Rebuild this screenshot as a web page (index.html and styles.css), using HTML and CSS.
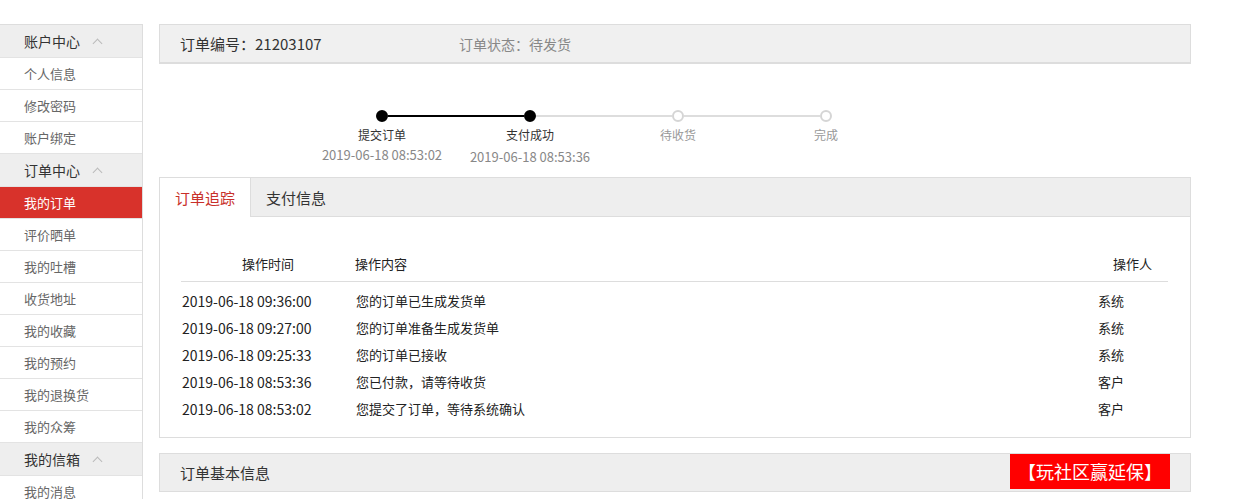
FILE: index.html
```html
<!DOCTYPE html>
<html lang="zh-CN">
<head>
    <meta charset="UTF-8">
    <title>订单详情</title>
    <link rel="stylesheet" href="styles.css">
</head>
<body>
    <div class="page">
        <div class="side">
            <div class="side-title">账户中心 <span class="arrow"></span></div>
            <a class="side-item">个人信息</a>
            <a class="side-item">修改密码</a>
            <a class="side-item">账户绑定</a>
            <div class="side-title">订单中心 <span class="arrow"></span></div>
            <a class="side-item active">我的订单</a>
            <a class="side-item">评价晒单</a>
            <a class="side-item">我的吐槽</a>
            <a class="side-item">收货地址</a>
            <a class="side-item">我的收藏</a>
            <a class="side-item">我的预约</a>
            <a class="side-item">我的退换货</a>
            <a class="side-item">我的众筹</a>
            <div class="side-title">我的信箱 <span class="arrow"></span></div>
            <a class="side-item">我的消息</a>
        </div>

        <div class="main">
            <div class="order-head">
                <span class="order-no">订单编号：21203107</span>
                <span class="order-status">订单状态：待发货</span>
            </div>

            <div class="steps">
                <div class="step done">
                    <div class="track"><i class="line-l"></i><span class="dot"></span><i class="line-r on"></i></div>
                    <p class="step-name">提交订单</p>
                    <p class="step-time">2019-06-18 08:53:02</p>
                </div>
                <div class="step done">
                    <div class="track"><i class="line-l on"></i><span class="dot"></span><i class="line-r gray"></i></div>
                    <p class="step-name">支付成功</p>
                    <p class="step-time low">2019-06-18 08:53:36</p>
                </div>
                <div class="step">
                    <div class="track"><i class="line-l gray"></i><span class="dot"></span><i class="line-r gray"></i></div>
                    <p class="step-name">待收货</p>
                </div>
                <div class="step">
                    <div class="track"><i class="line-l gray"></i><span class="dot"></span><i class="line-r"></i></div>
                    <p class="step-name">完成</p>
                </div>
            </div>

            <div class="box">
                <div class="tabs">
                    <span class="tab active">订单追踪</span>
                    <span class="tab">支付信息</span>
                </div>
                <table class="track-table">
                    <thead>
                        <tr>
                            <th class="col-time">操作时间</th>
                            <th class="col-text">操作内容</th>
                            <th class="col-user">操作人</th>
                        </tr>
                    </thead>
                    <tbody>
                        <tr><td class="date">2019-06-18 09:36:00</td><td>您的订单已生成发货单</td><td>系统</td></tr>
                        <tr><td class="date">2019-06-18 09:27:00</td><td>您的订单准备生成发货单</td><td>系统</td></tr>
                        <tr><td class="date">2019-06-18 09:25:33</td><td>您的订单已接收</td><td>系统</td></tr>
                        <tr><td class="date">2019-06-18 08:53:36</td><td>您已付款，请等待收货</td><td>客户</td></tr>
                        <tr><td class="date">2019-06-18 08:53:02</td><td>您提交了订单，等待系统确认</td><td>客户</td></tr>
                    </tbody>
                </table>
            </div>

            <div class="box info">
                <div class="info-head">
                    <span>订单基本信息</span>
                    <span class="promo">【玩社区赢延保】</span>
                </div>
            </div>
        </div>
    </div>
</body>
</html>
```

FILE: styles.css
```css
* {
    margin: 0;
    padding: 0;
    box-sizing: border-box;
}

body {
    font-family: "Noto Sans CJK SC", "Open Sans", sans-serif;
    color: #333;
    background: #fff;
}

.page {
    display: flex;
    align-items: flex-start;
    padding-top: 24px;
}

/* 左侧菜单 */
.side {
    width: 143px;
    border-right: 1px solid #ddd;
    border-top: 1px solid #ddd;
    flex-shrink: 0;
}

.side-title,
.side-item {
    display: flex;
    align-items: center;
    height: 32px;
    padding-left: 24px;
    border-bottom: 1px solid #e3e3e3;
}

.side-title {
    background: #eee;
    font-size: 14px;
    color: #333;
    height: 33px;
}

.side-item {
    font-size: 13px;
    color: #666;
}

.side-item.active {
    background: #d8322b;
    color: #fff;
}

.arrow {
    width: 7px;
    height: 7px;
    border-left: 1px solid #bbb;
    border-top: 1px solid #bbb;
    transform: rotate(45deg);
    margin: 4px 0 0 14px;
}

/* 右侧内容 */
.main {
    width: 1032px;
    margin-left: 16px;
}

.order-head {
    display: flex;
    align-items: center;
    height: 40px;
    background: #f0f0f0;
    border: 1px solid #ddd;
    border-bottom-width: 2px;
    padding-left: 20px;
}

.order-no {
    font-size: 15px;
    width: 279px;
}

.order-status {
    font-size: 14px;
    color: #888;
}

.steps {
    display: flex;
    padding: 45px 0 0 149px;
    height: 113px;
}

.step {
    width: 148px;
    text-align: center;
}

.track {
    display: flex;
    align-items: center;
    height: 14px;
}

.track i {
    flex: 1;
    height: 2px;
}

.track i.on {
    background: #000;
}

.track i.gray {
    background: #ddd;
}

.dot {
    width: 12px;
    height: 12px;
    border-radius: 50%;
    border: 2px solid #d5d5d5;
    background: #fff;
}

.step.done .dot {
    background: #000;
    border-color: #000;
}

.step-name {
    font-size: 12px;
    color: #999;
    margin-top: 3px;
    line-height: 18px;
}

.step.done .step-name {
    color: #333;
}

.step-time {
    font-size: 13px;
    color: #888;
    margin-top: 2px;
    line-height: 18px;
}

.step-time.low {
    margin-top: 4px;
}

.box {
    border: 1px solid #ddd;
}

.tabs {
    display: flex;
    height: 39px;
    background: #eee;
    border-bottom: 1px solid #ddd;
}

.tab {
    display: flex;
    align-items: center;
    padding: 0 15px;
    font-size: 15px;
    color: #333;
}

.tab.active {
    width: 91px;
    background: #fff;
    color: #c8302a;
    border-right: 1px solid #ddd;
    margin-bottom: -1px;
}

.track-table {
    width: 987px;
    margin: 30px 0 15px 21px;
    border-collapse: collapse;
    font-size: 13px;
    color: #222;
}

.track-table th {
    font-weight: normal;
    height: 34px;
    border-bottom: 1px solid #ddd;
    text-align: left;
}

.track-table th.col-time {
    width: 174px;
    text-align: center;
}

.track-table th.col-user {
    width: 71px;
    text-align: center;
}

.track-table td {
    height: 27px;
    padding-left: 1px;
}

.track-table td.date {
    font-size: 14px;
}

.track-table tbody tr:first-child td {
    height: 33px;
    padding-top: 6px;
}

.info {
    margin-top: 15px;
    border-bottom: none;
}

.info-head {
    display: flex;
    align-items: center;
    justify-content: space-between;
    height: 38px;
    background: #eee;
    border-bottom: 1px solid #ddd;
    padding: 0 20px;
    font-size: 15px;
}

.promo {
    background: #f00;
    color: #fff;
    font-size: 18px;
    height: 35px;
    line-height: 35px;
    padding: 0 8px;
    align-self: flex-start;
}
```
